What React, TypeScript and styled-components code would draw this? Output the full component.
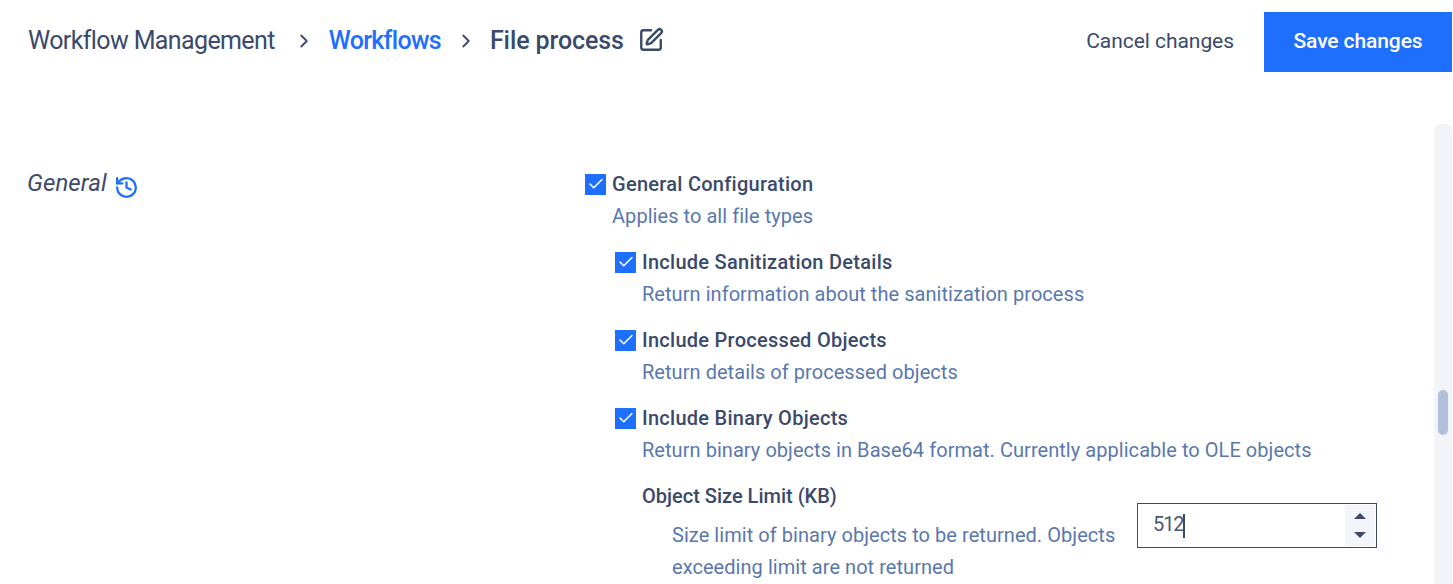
import React from 'react';
import styled, { createGlobalStyle } from 'styled-components';
import { ChevronRight, History, SquarePen, Check } from 'lucide-react';

const GlobalStyle = createGlobalStyle`
    html, body {
        margin: 0;
        padding: 0;
        height: 100%;
        overflow: hidden;
        background-color: white;
    }
    body {
        font-family: Roboto, "Liberation Sans", sans-serif;
        color: #3b4a6b;
    }
`;

const Page = styled.div`
    width: 1453px;
    height: 584px;
    overflow: hidden;
    display: flex;
    flex-direction: column;
`;

const Header = styled.header`
    height: 60px;
    padding: 12px 1px 0 28px;
    flex: none;
    display: flex;
    align-items: center;
    justify-content: space-between;
`;

const Crumbs = styled.nav`
    display: flex;
    align-items: center;
    height: 56px;
    margin-top: -4px;
    font-size: 25px;
`;

const Crumb = styled.span<{ $active?: boolean; $current?: boolean }>`
    color: ${p => (p.$active ? '#1f6fff' : '#3b4a6b')};
    font-weight: ${p => (p.$active || p.$current ? 500 : 400)};
    letter-spacing: ${p => (p.$active ? '-0.7px' : p.$current ? '-0.1px' : '-0.62px')};
    white-space: nowrap;
`;

const Separator = styled(ChevronRight)<{ $left: number; $right: number }>`
    width: 22px;
    height: 22px;
    margin: 2px ${p => p.$right}px 0 ${p => p.$left}px;
    color: #3b4a6b;
`;

const EditIcon = styled(SquarePen)`
    width: 26px;
    height: 26px;
    margin-left: 14px;
    color: #3b4a6b;
    stroke-width: 2.2;
`;

const Actions = styled.div`
    display: flex;
    align-items: center;
`;

const CancelButton = styled.button`
    border: 0;
    background: none;
    padding: 0 0 2px;
    margin-right: 30px;
    font: 400 21px Roboto, sans-serif;
    letter-spacing: -0.05px;
    color: #3b4a6b;
`;

const SaveButton = styled.button`
    width: 188px;
    height: 60px;
    border: 0;
    padding: 0 0 2px;
    background-color: #1f6fff;
    color: white;
    font: 500 21px Roboto, sans-serif;
    letter-spacing: -0.1px;
`;

const Body = styled.main`
    flex: 1;
    min-height: 0;
    display: flex;
`;

const Content = styled.div`
    flex: 1;
    display: flex;
    padding: 96px 0 0 27px;
`;

const SectionName = styled.div`
    width: 558px;
    flex: none;
    display: flex;
    align-items: flex-start;
    height: 32px;
`;

const SectionTitle = styled.em`
    font-size: 24px;
    line-height: 24px;
    margin-top: 3px;
    letter-spacing: 0.1px;
`;

const ResetIcon = styled(History)`
    width: 25px;
    height: 25px;
    margin: 7px 0 0 7px;
    color: #1f6fff;
    stroke-width: 2.2;
`;

const Options = styled.div`
    display: flex;
    flex-direction: column;
`;

const Option = styled.div<{ $nested?: boolean }>`
    margin-left: ${p => (p.$nested ? '30px' : '0')};
    margin-top: ${p => (p.$nested ? '14px' : '0')};
`;

const OptionLabel = styled.label`
    display: flex;
    align-items: center;
    height: 32px;
    gap: 6px;
    font-size: 20px;
    font-weight: 500;
    letter-spacing: 0.27px;
    white-space: nowrap;
`;

const CheckBox = styled.span`
    width: 21px;
    height: 21px;
    flex: none;
    display: flex;
    align-items: center;
    justify-content: center;
    background-color: #1f6fff;
    color: white;
`;

const Description = styled.div`
    margin-left: 27px;
    line-height: 32px;
    font-size: 20px;
    letter-spacing: 0.05px;
    color: #5a78ad;
    white-space: nowrap;
`;

const LimitBlock = styled.div`
    margin: 14px 0 0 57px;
    display: flex;
`;

const LimitText = styled.div`
    width: 495px;
    flex: none;
`;

const LimitTitle = styled.div`
    font-size: 20px;
    font-weight: 500;
    line-height: 32px;
`;

const LimitHint = styled.div`
    margin: 7px 0 0 30px;
    width: 450px;
    font-size: 20px;
    line-height: 32px;
    letter-spacing: 0.05px;
    color: #5a78ad;
`;

const NumberField = styled.div`
    width: 240px;
    height: 45px;
    margin-top: 23px;
    box-sizing: border-box;
    border: 1px solid #3b4a6b;
    display: flex;
    align-items: center;
    justify-content: space-between;
    padding: 1px 1px 1px 15px;
    font-size: 20px;
`;

const Value = styled.span`
    display: flex;
    align-items: center;
`;

const Digits = styled.span`
    margin-bottom: 3px;
    letter-spacing: -1.1px;
    color: #4a5878;
`;

const Caret = styled.i`
    width: 2px;
    height: 24px;
    background-color: #3b4a6b;
`;

const Spinner = styled.div`
    width: 30px;
    height: 100%;
    background-color: #f4f5fa;
    display: flex;
    flex-direction: column;
    align-items: center;
    justify-content: center;
    gap: 13px;
`;

const Arrow = styled.i<{ $down?: boolean }>`
    width: 0;
    height: 0;
    border-left: 6px solid transparent;
    border-right: 6px solid transparent;
    border-${p => (p.$down ? 'top' : 'bottom')}: 6px solid #3b4a6b;
`;

const ScrollTrack = styled.div`
    width: 18px;
    margin: 52px 1px 0 0;
    flex: none;
    border-radius: 6px 6px 0 0;
    background-color: #f2f4f9;
    display: flex;
    justify-content: center;
`;

const ScrollThumb = styled.div`
    width: 10px;
    height: 45px;
    margin-top: 266px;
    border-radius: 5px;
    background-color: #b2c0dc;
`;

const options = [
    { title: 'Include Sanitization Details', text: 'Return information about the sanitization process' },
    { title: 'Include Processed Objects', text: 'Return details of processed objects' },
    { title: 'Include Binary Objects', text: 'Return binary objects in Base64 format. Currently applicable to OLE objects' },
];

const App = () => {
    return (
        <Page>
            <GlobalStyle />
            <Header>
                <Crumbs>
                    <Crumb>Workflow Management</Crumb>
                    <Separator $left={18} $right={14} />
                    <Crumb $active>Workflows</Crumb>
                    <Separator $left={14} $right={13} />
                    <Crumb $current>File process</Crumb>
                    <EditIcon />
                </Crumbs>
                <Actions>
                    <CancelButton>Cancel changes</CancelButton>
                    <SaveButton>Save changes</SaveButton>
                </Actions>
            </Header>
            <Body>
                <Content>
                    <SectionName>
                        <SectionTitle>General</SectionTitle>
                        <ResetIcon />
                    </SectionName>
                    <Options>
                        <Option>
                            <OptionLabel>
                                <CheckBox><Check size={18} strokeWidth={2} /></CheckBox>
                                General Configuration
                            </OptionLabel>
                            <Description>Applies to all file types</Description>
                        </Option>
                        {options.map(o => (
                            <Option $nested key={o.title}>
                                <OptionLabel>
                                    <CheckBox><Check size={18} strokeWidth={2} /></CheckBox>
                                    {o.title}
                                </OptionLabel>
                                <Description>{o.text}</Description>
                            </Option>
                        ))}
                        <LimitBlock>
                            <LimitText>
                                <LimitTitle>Object Size Limit (KB)</LimitTitle>
                                <LimitHint>Size limit of binary objects to be returned. Objects exceeding limit are not returned</LimitHint>
                            </LimitText>
                            <NumberField>
                                <Value><Digits>512</Digits><Caret /></Value>
                                <Spinner>
                                    <Arrow />
                                    <Arrow $down />
                                </Spinner>
                            </NumberField>
                        </LimitBlock>
                    </Options>
                </Content>
                <ScrollTrack>
                    <ScrollThumb />
                </ScrollTrack>
            </Body>
        </Page>
    );
};

export default App;
